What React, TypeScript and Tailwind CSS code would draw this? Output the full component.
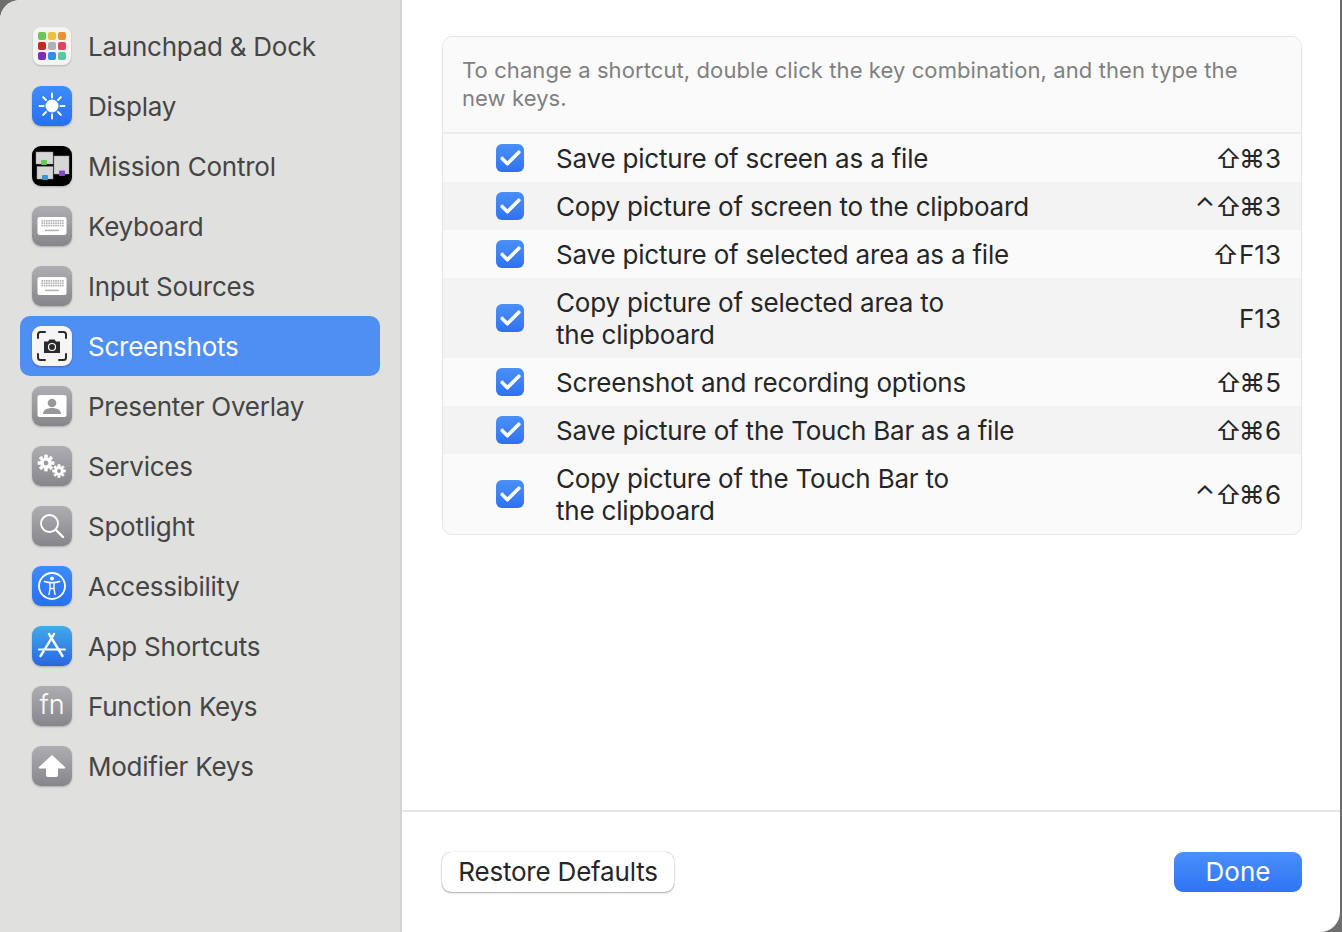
import type { ReactNode } from 'react'
import { Check } from 'lucide-react'

const font = { fontFamily: 'Inter, "Noto Sans", sans-serif' }

function Tile({ className, children }: { className: string; children: ReactNode }) {
  return (
    <div className={`w-10 h-10 rounded-[9px] flex items-center justify-center shrink-0 shadow-[0_1px_2px_rgba(0,0,0,0.25)] ${className}`}>
      {children}
    </div>
  )
}

const grayTile = 'bg-gradient-to-b from-[#aeaeb2] to-[#87878b]'
const blueTile = 'bg-gradient-to-b from-[#3f8cfb] to-[#2a6ef0]'

function LaunchpadIcon() {
  const colors = ['#6cc651', '#f0bf3e', '#e8942e', '#c8281f', '#aeb1b3', '#e8405a', '#7d2db5', '#2d8fe8', '#5bc6a6']
  return (
    <div className="w-10 h-10 flex items-center justify-center shrink-0">
      <div className="w-[38px] h-[38px] rounded-[8px] bg-[#f4f4f2] flex items-center justify-center shadow-[0_1px_2px_rgba(0,0,0,0.2)]">
        <div className="grid grid-cols-3 gap-[2px]">
          {colors.map((c) => (
            <div key={c} className="w-2 h-2 rounded-[2px]" style={{ backgroundColor: c }} />
          ))}
        </div>
      </div>
    </div>
  )
}

function DisplayIcon() {
  const rays = [0, 45, 90, 135, 180, 225, 270, 315]
  return (
    <Tile className={blueTile}>
      <svg width="30" height="30" viewBox="0 0 30 30">
        <circle cx="15" cy="15" r="6.5" fill="white" />
        {rays.map((r) => (
          <line key={r} x1="15" y1="2.5" x2="15" y2="6.5" stroke="white" strokeWidth="2" strokeLinecap="round" transform={`rotate(${r} 15 15)`} />
        ))}
      </svg>
    </Tile>
  )
}

function MissionIcon() {
  return (
    <Tile className="bg-black">
      <svg width="40" height="40" viewBox="0 0 40 40">
        <rect x="4" y="6" width="17" height="12" fill="#d6d6d6" stroke="#999" strokeWidth="0.5" />
        <rect x="5" y="20.500" width="16" height="12.500" fill="#d6d6d6" stroke="#999" strokeWidth="0.5" />
        <rect x="22" y="10" width="15" height="18" fill="#d6d6d6" stroke="#999" strokeWidth="0.5" />
        <rect x="9" y="14" width="6" height="5" rx="1" fill="#64cb55" />
        <rect x="10" y="29" width="6" height="5" rx="1" fill="#2f96ee" />
        <rect x="27" y="24.500" width="6" height="5.500" rx="1" fill="#8a45c8" />
      </svg>
    </Tile>
  )
}

function KeyboardIcon() {
  const keys = []
  for (let row = 0; row < 3; row++) {
    for (let col = 0; col < 10; col++) {
      keys.push(<rect key={`${row}-${col}`} x={4.4 + col * 2.3} y={4 + row * 2.4} width="1.6" height="1.7" fill="#b4b4b8" />)
    }
  }
  return (
    <Tile className={grayTile}>
      <svg width="30" height="20" viewBox="0 0 30 20">
        <rect x="0.5" y="1" width="29" height="18" rx="2" fill="white" />
        {keys}
        <rect x="8" y="13.600" width="14" height="1.600" fill="#b4b4b8" />
      </svg>
    </Tile>
  )
}

function ScreenshotIcon() {
  return (
    <Tile className="bg-[#f5f5f5]">
      <svg width="32" height="32" viewBox="0 0 32 32" fill="none">
        <path d="M2 8V4.5A2.5 2.5 0 0 1 4.500 2H9M23 2h4.500A2.500 2.500 0 0 1 30 4.500V8M30 24v3.500A2.500 2.500 0 0 1 27.500 30H23M9 30H4.500A2.500 2.500 0 0 1 2 27.500V24" stroke="#2a2a2a" strokeWidth="2" strokeLinecap="round" />
        <path d="M8 11.500h4l1.500-2h5l1.500 2h4v11.500H8z" fill="#2a2a2a" />
        <circle cx="16" cy="17" r="3.500" fill="#2a2a2a" stroke="white" strokeWidth="1.200" />
      </svg>
    </Tile>
  )
}

function PresenterIcon() {
  return (
    <Tile className={grayTile}>
      <svg width="30" height="24" viewBox="0 0 30 24">
        <rect x="0.5" y="1" width="29" height="22" rx="2" fill="white" />
        <circle cx="15" cy="9" r="4.300" fill="#98989c" />
        <path d="M6 20c0-4 4-6 9-6s9 2 9 6z" fill="#98989c" />
      </svg>
    </Tile>
  )
}

function Gear({ cx, cy, r }: { cx: number; cy: number; r: number }) {
  const teeth = [0, 45, 90, 135, 180, 225, 270, 315]
  return (
    <g>
      {teeth.map((t) => (
        <rect key={t} x={cx - r * 0.28} y={cy - r * 1.35} width={r * 0.56} height={r * 0.6} fill="white" transform={`rotate(${t} ${cx} ${cy})`} />
      ))}
      <circle cx={cx} cy={cy} r={r * 0.66} fill="none" stroke="white" strokeWidth={r * 0.55} />
    </g>
  )
}

function ServicesIcon() {
  return (
    <Tile className={grayTile}>
      <svg width="34" height="34" viewBox="0 0 34 34">
        <Gear cx={11} cy={14} r={6.200} />
        <Gear cx={24} cy={22} r={5} />
      </svg>
    </Tile>
  )
}

function SpotlightIcon() {
  return (
    <Tile className={grayTile}>
      <svg width="30" height="30" viewBox="0 0 30 30" fill="none" stroke="white" strokeLinecap="round">
        <circle cx="12.500" cy="12.500" r="8.500" strokeWidth="1.800" />
        <line x1="19" y1="19" x2="26" y2="26" strokeWidth="2.400" />
      </svg>
    </Tile>
  )
}

function AccessibilityIcon() {
  return (
    <Tile className={blueTile}>
      <svg width="34" height="34" viewBox="0 0 34 34" fill="none" stroke="white">
        <circle cx="17" cy="17" r="13" strokeWidth="1.800" />
        <circle cx="17" cy="9.500" r="2" fill="white" stroke="none" />
        <path d="M9.500 12.500c2.500.8 5 1.200 7.500 1.200s5-.4 7.500-1.200" strokeWidth="1.600" strokeLinecap="round" />
        <path d="M15 14v5.500L14 25.500M19 14v5.500L20 25.500M15 19.500h4" strokeWidth="1.400" strokeLinecap="round" />
      </svg>
    </Tile>
  )
}

function AppStoreIcon() {
  return (
    <Tile className="bg-gradient-to-b from-[#46a8ec] to-[#2a66e0]">
      <svg width="30" height="30" viewBox="0 0 30 30" fill="none" stroke="white" strokeLinecap="round">
        <path d="M12 3l13.500 22M17 3L8 18" strokeWidth="2.400" />
        <path d="M2 18.500h26" strokeWidth="2" />
        <path d="M3.500 25l3-4.500" strokeWidth="2.400" />
      </svg>
    </Tile>
  )
}

function FnIcon() {
  return (
    <Tile className={grayTile}>
      <span className="text-[27px] leading-none text-white font-light mb-[3px]">fn</span>
    </Tile>
  )
}

function ModifierIcon() {
  return (
    <Tile className={grayTile}>
      <svg width="28" height="26" viewBox="0 0 28 26">
        <path d="M14 2 L27 14 a0.800 0.800 0 0 1 -0.600 1.400 H20 V22 a2 2 0 0 1 -2 2 H10 a2 2 0 0 1 -2 -2 V15.400 H1.600 A0.800 0.800 0 0 1 1 14 Z" fill="white" />
      </svg>
    </Tile>
  )
}

const sidebar: { label: string; icon: ReactNode; active?: boolean }[] = [
  { label: 'Launchpad & Dock', icon: <LaunchpadIcon /> },
  { label: 'Display', icon: <DisplayIcon /> },
  { label: 'Mission Control', icon: <MissionIcon /> },
  { label: 'Keyboard', icon: <KeyboardIcon /> },
  { label: 'Input Sources', icon: <KeyboardIcon /> },
  { label: 'Screenshots', icon: <ScreenshotIcon />, active: true },
  { label: 'Presenter Overlay', icon: <PresenterIcon /> },
  { label: 'Services', icon: <ServicesIcon /> },
  { label: 'Spotlight', icon: <SpotlightIcon /> },
  { label: 'Accessibility', icon: <AccessibilityIcon /> },
  { label: 'App Shortcuts', icon: <AppStoreIcon /> },
  { label: 'Function Keys', icon: <FnIcon /> },
  { label: 'Modifier Keys', icon: <ModifierIcon /> },
]

const shortcuts: { lines: string[]; keys: string }[] = [
  { lines: ['Save picture of screen as a file'], keys: '⇧⌘3' },
  { lines: ['Copy picture of screen to the clipboard'], keys: '⌃⇧⌘3' },
  { lines: ['Save picture of selected area as a file'], keys: '⇧F13' },
  { lines: ['Copy picture of selected area to', 'the clipboard'], keys: 'F13' },
  { lines: ['Screenshot and recording options'], keys: '⇧⌘5' },
  { lines: ['Save picture of the Touch Bar as a file'], keys: '⇧⌘6' },
  { lines: ['Copy picture of the Touch Bar to', 'the clipboard'], keys: '⌃⇧⌘6' },
]

function Keys({ keys }: { keys: string }) {
  // shift sits closer to the command glyph than the fallback font spaces it
  if (keys.includes('⇧⌘')) {
    const [before, after] = keys.split('⇧⌘')
    return (
      <>
        {before}
        <span className="tracking-[-3px]">⇧</span>⌘{after}
      </>
    )
  }
  return <>{keys}</>
}

function ShortcutRow({ lines, keys, odd }: { lines: string[]; keys: string; odd: boolean }) {
  return (
    <div className={`flex items-center pl-[53px] pr-5 ${lines.length > 1 ? 'h-20' : 'h-12'} ${odd ? 'bg-[#f3f3f3]' : ''}`}>
      <div className="w-7 h-7 rounded-[6px] bg-gradient-to-b from-[#4b8ffa] to-[#2f72f2] flex items-center justify-center shrink-0">
        <Check size={25} color="white" strokeWidth={3.400} />
      </div>
      <div className="ml-8 flex-1 pt-[2px] text-[26px] leading-8 tracking-[-0.2px] text-[#262626]">
        {lines.map((l) => (
          <div key={l}>{l}</div>
        ))}
      </div>
      <div className="pt-[2px] text-[26px] leading-8 text-[#262626]" style={{ fontFamily: 'Inter, "DejaVu Sans", sans-serif' }}>
        <Keys keys={keys} />
      </div>
    </div>
  )
}

export default function App() {
  return (
    <div className="w-[1342px] h-[932px] bg-[#6e6e6e] overflow-hidden" style={font}>
      <div className="w-[1340px] h-[932px] flex rounded-tl-[20px] rounded-br-[20px] overflow-hidden bg-white">
        <aside className="w-[402px] shrink-0 bg-[#e0e0de] border-r-2 border-[#d3d3d1] pt-4 px-5">
          {sidebar.map((item) => (
            <div key={item.label} className={`h-[60px] w-[360px] rounded-[10px] pl-3 flex items-center gap-4 ${item.active ? 'bg-[#4f8ef3]' : ''}`}>
              {item.icon}
              <span className={`text-[26px] tracking-[-0.25px] ${item.active ? 'text-white' : 'text-[#454545]'}`}>{item.label}</span>
            </div>
          ))}
        </aside>
        <main className="flex-1 flex flex-col">
          <div className="flex-1 pt-9 pl-10 pr-[38px]">
            <div className="rounded-[10px] border border-[#e6e6e6] bg-[#fafafa] overflow-hidden">
              <div className="h-[97px] pt-[19px] px-[19px] text-[22px] leading-7 tracking-[0.09px] text-[#808080] border-b-2 border-[#ececec]">
                To change a shortcut, double click the key combination, and then type the new keys.
              </div>
              {shortcuts.map((s, i) => (
                <ShortcutRow key={s.lines[0]} lines={s.lines} keys={s.keys} odd={i % 2 === 1} />
              ))}
            </div>
          </div>
          <div className="h-[122px] border-t-2 border-[#e7e7e7] pl-10 pr-[38px] pt-10 flex justify-between items-start">
            <button className="h-10 w-[232px] pb-[6px] rounded-[9px] bg-white text-[26px] tracking-[-0.2px] text-[#262626] shadow-[0_0_1px_rgba(0,0,0,0.4),0_1px_2px_rgba(0,0,0,0.3)]">
              Restore Defaults
            </button>
            <button className="h-10 w-32 pb-[6px] rounded-[9px] bg-gradient-to-b from-[#4a8ffa] to-[#2f74f3] text-[26px] text-white">
              Done
            </button>
          </div>
        </main>
      </div>
    </div>
  )
}
